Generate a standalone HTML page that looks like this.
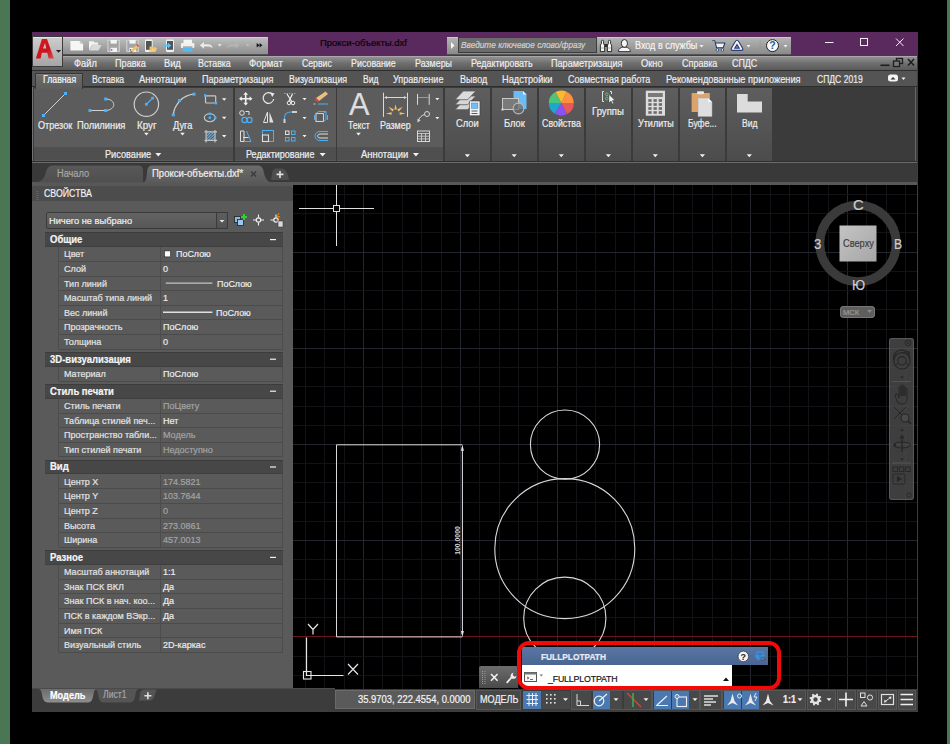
<!DOCTYPE html><html><head><meta charset="utf-8"><style>
html,body{margin:0;padding:0;}
body{width:950px;height:744px;background:#000;position:relative;overflow:hidden;font-family:"Liberation Sans",sans-serif;}
.r{position:absolute;}
.t{position:absolute;white-space:nowrap;line-height:1;transform-origin:0 0;-webkit-text-stroke:0.2px currentColor;}
</style></head><body>
<div class="r" style="left:0px;top:0px;width:10px;height:744px;background:#4a7654;"></div>
<div class="r" style="left:947px;top:0px;width:3px;height:744px;background:#4a7654;"></div>
<div class="r" style="left:32px;top:32px;width:886px;height:680px;background:#3c3c3c;"></div>
<div class="r" style="left:32px;top:32px;width:886px;height:23px;background:#5a2a5e;"></div>
<div class="r" style="left:32px;top:36px;width:31px;height:31px;background:linear-gradient(#d6d6d6,#9a9a9a);box-shadow:inset 0 0 0 1px #5a5a5a;"></div>
<svg class="r" style="left:34px;top:37px;" width="28" height="29" viewBox="0 0 28 29"><path d="M3 22 L10 2 L14 2 L21 22 L16.5 22 L14.8 16.5 L9.2 16.5 L7.5 22 Z M10.2 13 L13.8 13 L12 6.5 Z" fill="#c8161c" fill-rule="evenodd"/><path d="M22 13.5 L27 13.5 L24.5 16.5Z" fill="#2a2a2a"/></svg>
<div class="r" style="left:63px;top:37px;width:205px;height:18px;background:linear-gradient(#bdbdbd,#8e8e8e);border-top:1px solid #d0d0d0;border-bottom:1px solid #555;box-sizing:border-box;"></div>
<svg class="r" style="left:0px;top:0px;" width="300" height="60" viewBox="0 0 300 60"><path d="M70.4 41 H79.8 L83.1 43.8 V50.4 H70.4Z" fill="#f6f6f6"/><path d="M79.8 41 V43.8 H83.1" fill="#c8c8c8"/><path d="M89 41.2 H93.5 L94.5 42.4 H98.1 V44.8 H92.3 L89 50.3Z" fill="#f2f2f2"/><path d="M92.5 45 H101.6 L98.4 50.4 H89.3Z" fill="#dadada"/><rect x="107.3" y="39.8" width="12.6" height="12.1" fill="#cfcfcf"/><rect x="108.5" y="40.8" width="10.2" height="10.1" fill="#a4a4a4"/><rect x="110.5" y="40" width="6.3" height="3.6" fill="#f4f4f4"/><rect x="110.5" y="47.8" width="6.5" height="4.1" fill="#f4f4f4"/><rect x="111.1" y="49.3" width="1.2" height="1.2" fill="#333"/><rect x="126.2" y="39.8" width="12.6" height="12.1" fill="#cfcfcf"/><rect x="127.4" y="40.8" width="10.2" height="10.1" fill="#a4a4a4"/><rect x="129.4" y="40" width="6.3" height="3.6" fill="#f4f4f4"/><rect x="129.4" y="47.8" width="6.5" height="4.1" fill="#f4f4f4"/><rect x="130.0" y="49.3" width="1.2" height="1.2" fill="#333"/><path d="M130.8 50.8 L136.3 45 L138.2 46.9 L132.7 52.2Z" fill="#f2c060"/><path d="M136.3 45 L137.3 44 L139.2 45.9 L138.2 46.9Z" fill="#e84040"/><path d="M130.8 50.8 L132.7 52.2 L130.2 52.6Z" fill="#555"/><rect x="145" y="39.5" width="7.7" height="12.4" rx="1.2" fill="#f0f0f0"/><rect x="146" y="41" width="5.7" height="8.8" fill="#555"/><path d="M149.5 46.5 H152 L152.8 47.3 H156 V48.3 H152 L150 52 H149.5Z" fill="#f2c060"/><path d="M151.8 48.3 H157.2 L155.2 52 H149.9Z" fill="#f6ca70"/><rect x="166" y="39.5" width="8" height="12.4" rx="1.2" fill="#f0f0f0"/><rect x="167" y="41" width="6" height="8.8" fill="#555"/><path d="M163.5 44.5 H168 V42.7 L171.2 45.6 L168 48.5 V46.7 H163.5Z" fill="#5cc0f8"/><rect x="183.5" y="39.7" width="8.5" height="3.5" fill="#f4f4f4"/><rect x="180.9" y="43" width="13.5" height="5" rx="1" fill="#f0f0f0"/><rect x="183" y="47.5" width="9.4" height="4.2" fill="#58b8f4"/><rect x="183" y="46.5" width="9.4" height="1" fill="#888"/><path d="M199.8 45.3 L204 42 V44.3 H208 C211 44.3 212.5 46 212.5 48.5 C211.5 47 210 46.6 208 46.6 H204 V48.8Z" fill="#eaeaea"/><path d="M217.8 44.3 H221.6 L219.7 46.4Z" fill="#f0f0f0"/><path d="M239.6 45.3 L235.4 42 V44.3 H231.4 C228.4 44.3 226.9 46 226.9 48.5 C227.9 47 229.4 46.6 231.4 46.6 H235.4 V48.8Z" fill="#b4b4b4"/><path d="M245.7 44.3 H249.5 L247.6 46.4Z" fill="#c4c4c4"/><path d="M256.7 43 L259.5 45.2 L256.7 47.4Z M259.6 43 L262.4 45.2 L259.6 47.4Z" fill="#111"/></svg>
<span class="t" style="left:319.80px;top:37.57px;font-size:9.6px;color:#050505;transform:scaleX(0.9853);">Прокси-объекты.dxf</span>
<div class="r" style="left:447px;top:37px;width:344px;height:18px;background:linear-gradient(#b4b4b4,#8a8a8a);border-top:1px solid #c8c8c8;border-bottom:1px solid #555;box-sizing:border-box;"></div>
<div class="r" style="left:458px;top:37px;width:139px;height:16px;background:#6c6c6c;border:1px solid #3c3c3c;box-sizing:border-box;"></div>
<svg class="r" style="left:447px;top:37px;" width="11" height="17" viewBox="0 0 11 17"><path d="M4 5 L7.5 8.5 L4 12Z" fill="#fafafa"/></svg>
<span class="t" style="left:460.60px;top:40.98px;font-size:9px;color:#d2d2d2;font-style:italic;transform:scaleX(0.9200);">Введите ключевое слово/фразу</span>
<svg class="r" style="left:0px;top:0px;pointer-events:none;" width="950" height="60" viewBox="0 0 950 60"><rect x="603.5" y="44" width="4.5" height="3" fill="#333"/><path d="M600.4 51.6 V45.2 L601.4 43.6 V41.2 C601.4 39.9 603.6 39.9 603.6 41.2 V43.6 L604.6 45.2 V51.6Z M607.4 51.6 V45.2 L608.4 43.6 V41.2 C608.4 39.9 610.6 39.9 610.6 41.2 V43.6 L611.6 45.2 V51.6Z" fill="#f6f6f6" stroke="#1e1e1e" stroke-width=".9"/><path d="M600.6 48 H604.4 M607.6 48 H611.4" stroke="#888" stroke-width=".6"/><path d="M618.3 51.6 C618.8 48.5 620.5 47.6 622.6 47.3 L626.2 47.3 C628.3 47.6 630 48.5 630.5 51.6Z" fill="#f6f6f6" stroke="#2a2a40" stroke-width=".9"/><ellipse cx="624.4" cy="43.4" rx="3.1" ry="3.9" fill="#f6f6f6" stroke="#1e1e1e" stroke-width=".9"/><path d="M712.3 40.8 H714.8 L716.6 47.8 H723.2 L724.8 43 H715.4" fill="#f4f4f4" stroke="#1e3a70" stroke-width="1.1" stroke-linejoin="round"/><circle cx="717.4" cy="50" r="1.3" fill="#f4f4f4" stroke="#1e3a70" stroke-width=".8"/><circle cx="722.4" cy="50" r="1.3" fill="#f4f4f4" stroke="#1e3a70" stroke-width=".8"/><path d="M737 40.3 C738 40.3 738.4 41 739 42 L742.6 48.3 C743.3 49.6 742.6 50.4 741.4 50.4 H732.6 C731.4 50.4 730.7 49.6 731.4 48.3 L735 42 C735.6 41 736 40.3 737 40.3Z M737 44.6 L734.8 48.1 H739.2Z" fill="#f4f4f4" fill-rule="evenodd" stroke="#2a3f78" stroke-width="1.1"/><path d="M699.5 45 H703.5 L701.5 47.5Z M746.5 45 H750.5 L748.5 47.5Z M783.5 45 H787.5 L785.5 47.5Z" fill="#f0f0f0"/><rect x="759.5" y="39" width="1" height="14" fill="#9a9a9a" opacity=".5"/><circle cx="772.5" cy="45.6" r="6" fill="#f8f8f8" stroke="#222" stroke-width="1"/><text x="772.5" y="49.4" font-family="Liberation Sans" font-weight="bold" font-size="10.5" text-anchor="middle" fill="#2a5a9a">?</text></svg>
<span class="t" style="left:634.90px;top:40.53px;font-size:10px;color:#f4f4f4;transform:scaleX(0.9009);">Вход в службы</span>
<svg class="r" style="left:800px;top:32px;" width="118" height="23" viewBox="0 0 118 23"><rect x="25" y="10" width="8.5" height="1" fill="#f0f0f0"/><rect x="60.5" y="6.5" width="7" height="7" fill="none" stroke="#f0f0f0" stroke-width="1"/><path d="M96 6.5 L103.5 14 M103.5 6.5 L96 14" stroke="#f0f0f0" stroke-width="1"/></svg>
<div class="r" style="left:32px;top:55px;width:886px;height:1px;background:#3e3e3e;"></div>
<div class="r" style="left:32px;top:56px;width:886px;height:15px;background:linear-gradient(#b4b4b4 0,#8e8e8e 1.5px,#6e6e6e 50%,#565656 100%);"></div>
<div class="r" style="left:32px;top:70px;width:886px;height:1px;background:#2e2e2e;"></div>
<div class="r" style="left:32px;top:36px;width:31px;height:31px;background:linear-gradient(#cfcfcf,#a4a4a4);box-shadow:inset 0 0 0 1px #3c3c3c, inset 0 2px 0 #e4e4e4;"></div>
<svg class="r" style="left:0px;top:0px;" width="70" height="70" viewBox="0 0 70 70"><defs><linearGradient id="ag" x1="0" y1="0" x2="1" y2="1"><stop offset="0" stop-color="#e01c22"/><stop offset=".6" stop-color="#c8121a"/><stop offset="1" stop-color="#e04a50"/></linearGradient></defs><path d="M35.9 58.6 L41.9 39 H47 L53.9 58.6 H48.6 L47.3 52.8 H41.8 L40.6 58.6 Z M43 48.6 H46.3 L45 43 Z" fill="url(#ag)" fill-rule="evenodd"/><path d="M55.9 50 H61.2 L58.55 52.8Z" fill="#222"/></svg>
<span class="t" style="left:74.20px;top:58.03px;font-size:10.6px;color:#eeeeee;transform:scaleX(0.8752);">Файл</span>
<span class="t" style="left:115.30px;top:58.03px;font-size:10.6px;color:#eeeeee;transform:scaleX(0.8631);">Правка</span>
<span class="t" style="left:164.20px;top:58.03px;font-size:10.6px;color:#eeeeee;transform:scaleX(0.8750);">Вид</span>
<span class="t" style="left:198.00px;top:58.03px;font-size:10.6px;color:#eeeeee;transform:scaleX(0.8325);">Вставка</span>
<span class="t" style="left:248.80px;top:58.03px;font-size:10.6px;color:#eeeeee;transform:scaleX(0.8977);">Формат</span>
<span class="t" style="left:301.50px;top:58.03px;font-size:10.6px;color:#eeeeee;transform:scaleX(0.8209);">Сервис</span>
<span class="t" style="left:350.50px;top:58.03px;font-size:10.6px;color:#eeeeee;transform:scaleX(0.8390);">Рисование</span>
<span class="t" style="left:414.50px;top:58.03px;font-size:10.6px;color:#eeeeee;transform:scaleX(0.8400);">Размеры</span>
<span class="t" style="left:470.70px;top:58.03px;font-size:10.6px;color:#eeeeee;transform:scaleX(0.8415);">Редактировать</span>
<span class="t" style="left:550.60px;top:58.03px;font-size:10.6px;color:#eeeeee;transform:scaleX(0.8583);">Параметризация</span>
<span class="t" style="left:641.00px;top:58.03px;font-size:10.6px;color:#eeeeee;transform:scaleX(0.8803);">Окно</span>
<span class="t" style="left:681.60px;top:58.03px;font-size:10.6px;color:#eeeeee;transform:scaleX(0.8510);">Справка</span>
<span class="t" style="left:731.70px;top:58.03px;font-size:10.6px;color:#eeeeee;transform:scaleX(0.8405);">СПДС</span>
<svg class="r" style="left:870px;top:55px;" width="48" height="16" viewBox="0 0 48 16"><rect x="10.5" y="9.5" width="9" height="1.6" fill="#1e1e1e"/><rect x="26.5" y="3.5" width="6" height="5" fill="none" stroke="#1e1e1e" stroke-width="1.3"/><rect x="23.5" y="6" width="6" height="5.5" fill="#777" stroke="#1e1e1e" stroke-width="1.3"/><path d="M38 4 L44 10.5 M44 4 L38 10.5" stroke="#1e1e1e" stroke-width="1.6"/></svg>
<div class="r" style="left:32px;top:71px;width:886px;height:15px;background:#545454;"></div>
<div class="r" style="left:32px;top:86px;width:886px;height:1px;background:#2d2d2d;"></div>
<span class="t" style="left:91.60px;top:73.53px;font-size:10.6px;color:#ececec;transform:scaleX(0.8173);">Вставка</span>
<span class="t" style="left:139.00px;top:73.53px;font-size:10.6px;color:#ececec;transform:scaleX(0.8925);">Аннотации</span>
<span class="t" style="left:201.50px;top:73.53px;font-size:10.6px;color:#ececec;transform:scaleX(0.8583);">Параметризация</span>
<span class="t" style="left:288.80px;top:73.53px;font-size:10.6px;color:#ececec;transform:scaleX(0.8386);">Визуализация</span>
<span class="t" style="left:362.50px;top:73.53px;font-size:10.6px;color:#ececec;transform:scaleX(0.8021);">Вид</span>
<span class="t" style="left:393.30px;top:73.53px;font-size:10.6px;color:#ececec;transform:scaleX(0.8567);">Управление</span>
<span class="t" style="left:459.50px;top:73.53px;font-size:10.6px;color:#ececec;transform:scaleX(0.8518);">Вывод</span>
<span class="t" style="left:502.20px;top:73.53px;font-size:10.6px;color:#ececec;transform:scaleX(0.8684);">Надстройки</span>
<span class="t" style="left:568.30px;top:73.53px;font-size:10.6px;color:#ececec;transform:scaleX(0.8485);">Совместная работа</span>
<span class="t" style="left:665.90px;top:73.53px;font-size:10.6px;color:#ececec;transform:scaleX(0.8747);">Рекомендованные приложения</span>
<span class="t" style="left:816.80px;top:73.53px;font-size:10.6px;color:#ececec;transform:scaleX(0.8067);">СПДС 2019</span>
<svg class="r" style="left:880px;top:71px;" width="38" height="15" viewBox="0 0 38 15"><rect x="8" y="3.5" width="10" height="7" rx="2.5" fill="#f4f4f4"/><path d="M10.5 8.5 L13 6 L15.5 8.5Z" fill="#333"/><path d="M21.5 6.5 H25.5 L23.5 9Z" fill="#f0f0f0"/></svg>
<div class="r" style="left:32px;top:87px;width:886px;height:75px;background:#3b3b3b;"></div>
<div class="r" style="left:32px;top:87px;width:1px;height:76px;background:#727272;"></div>
<div class="r" style="left:915px;top:87px;width:1px;height:76px;background:#666;"></div>
<div class="r" style="left:34px;top:88px;width:199px;height:59px;background:#5c5c5c;"></div>
<div class="r" style="left:34px;top:147px;width:199px;height:13px;background:#4f4f4f;"></div>
<div class="r" style="left:34px;top:160px;width:199px;height:1px;background:#595959;"></div>
<div class="r" style="left:235px;top:88px;width:101px;height:59px;background:#5c5c5c;"></div>
<div class="r" style="left:235px;top:147px;width:101px;height:13px;background:#4f4f4f;"></div>
<div class="r" style="left:235px;top:160px;width:101px;height:1px;background:#595959;"></div>
<div class="r" style="left:337px;top:88px;width:106px;height:59px;background:#5c5c5c;"></div>
<div class="r" style="left:337px;top:147px;width:106px;height:13px;background:#4f4f4f;"></div>
<div class="r" style="left:337px;top:160px;width:106px;height:1px;background:#595959;"></div>
<div class="r" style="left:445px;top:88px;width:45px;height:73px;background:linear-gradient(#5e5e5e,#4c4c4c);"></div>
<div class="r" style="left:492px;top:88px;width:45px;height:73px;background:linear-gradient(#5e5e5e,#4c4c4c);"></div>
<div class="r" style="left:539px;top:88px;width:45px;height:73px;background:linear-gradient(#5e5e5e,#4c4c4c);"></div>
<div class="r" style="left:586px;top:88px;width:45px;height:73px;background:linear-gradient(#5e5e5e,#4c4c4c);"></div>
<div class="r" style="left:633px;top:88px;width:45px;height:73px;background:linear-gradient(#5e5e5e,#4c4c4c);"></div>
<div class="r" style="left:680px;top:88px;width:45px;height:73px;background:linear-gradient(#5e5e5e,#4c4c4c);"></div>
<div class="r" style="left:727px;top:88px;width:45px;height:73px;background:linear-gradient(#5e5e5e,#4c4c4c);"></div>
<div class="r" style="left:32px;top:161px;width:886px;height:1px;background:#303030;"></div>
<div class="r" style="left:35px;top:73px;width:48px;height:16px;background:linear-gradient(#6c6c6c,#5e5e5e);border:1px solid #363636;border-bottom:none;box-sizing:border-box;box-shadow:inset 0 1px 0 #7a7a7a;"></div>
<span class="t" style="left:42.60px;top:73.53px;font-size:10.6px;color:#f8f8f8;transform:scaleX(0.8228);">Главная</span>
<span class="t" style="left:104.50px;top:149.94px;font-size:10px;color:#eeeeee;transform:scaleX(0.9176);">Рисование</span>
<span class="t" style="left:246.30px;top:149.94px;font-size:10px;color:#eeeeee;transform:scaleX(0.8976);">Редактирование</span>
<span class="t" style="left:361.00px;top:149.94px;font-size:10px;color:#eeeeee;transform:scaleX(0.9440);">Аннотации</span>
<svg class="r" style="left:0px;top:0px;pointer-events:none;" width="950" height="170" viewBox="0 0 950 170"><path d="M155.3 152.95 H161.3 L158.3 156.4Z" fill="#f2f2f2"/><path d="M319.6 152.95 H325.6 L322.6 156.4Z" fill="#f2f2f2"/><path d="M412.9 152.95 H418.9 L415.9 156.4Z" fill="#f2f2f2"/><path d="M43.5 115.5 L65.5 93.5" stroke="#d4d4d4" stroke-width="1"/><rect x="42" y="114" width="3" height="3" fill="#4cb0f8"/><rect x="64" y="92" width="3" height="3" fill="#4cb0f8"/><path d="M90 110.5 H105.5 C111 110.5 113.8 107 113.8 104.7 C113.8 102 111 99 105.5 99" fill="none" stroke="#d4d4d4" stroke-width="1"/><rect x="88.5" y="109" width="3" height="3" fill="#4cb0f8"/><rect x="104.2" y="109" width="3" height="3" fill="#4cb0f8"/><rect x="104.2" y="97.5" width="3" height="3" fill="#4cb0f8"/><circle cx="146.4" cy="104.2" r="12.2" fill="none" stroke="#cfcfcf" stroke-width="1.2"/><path d="M146.4 104.2 L153.5 97.2" stroke="#4cb0f8" stroke-width="1.2"/><path d="M154.2 96.5 L150.5 97.3 L153.4 100.2Z" fill="#4cb0f8"/><rect x="145" y="102.8" width="2.8" height="2.8" fill="#4cb0f8"/><path d="M173.3 114.8 C174.5 104 183 95 194 94.2" fill="none" stroke="#cfcfcf" stroke-width="1.2"/><rect x="171.8" y="113.3" width="3" height="3" fill="#4cb0f8"/><rect x="178" y="99" width="3" height="3" fill="#4cb0f8"/><rect x="192.5" y="92.7" width="3" height="3" fill="#4cb0f8"/><path d="M144.1 132.735 H148.70000000000002 L146.4 135.38Z" fill="#f2f2f2"/><path d="M180.2 132.735 H184.8 L182.5 135.38Z" fill="#f2f2f2"/><rect x="205.5" y="95.8" width="10.2" height="7.2" rx=".8" fill="none" stroke="#c8c8c8" stroke-width="1.2"/><rect x="204" y="94.2" width="2.4" height="2.4" fill="#4cb0f8"/><rect x="214.8" y="102" width="2.4" height="2.4" fill="#4cb0f8"/><ellipse cx="209.8" cy="117.7" rx="5.5" ry="4" fill="none" stroke="#c8c8c8" stroke-width="1.1"/><rect x="208.6" y="112.6" width="2.4" height="2.4" fill="#4cb0f8"/><rect x="208.6" y="116.5" width="2.4" height="2.4" fill="#4cb0f8"/><rect x="214.1" y="116.5" width="2.4" height="2.4" fill="#4cb0f8"/><defs><pattern id="hp" width="2" height="2" patternUnits="userSpaceOnUse" patternTransform="rotate(45)"><rect width="1" height="2" fill="#5ab0f0"/></pattern></defs><rect x="206.5" y="132.3" width="8.3" height="7.8" fill="url(#hp)"/><path d="M204.5 131.8 H217 M204.5 140.3 H217 M206.1 130 V142.5 M215 130 V142.5" stroke="#c4c4c4" stroke-width="1.2"/><path d="M222.0 98.29 H226.39999999999998 L224.2 100.82Z" fill="#f2f2f2"/><path d="M222.0 116.79 H226.39999999999998 L224.2 119.32Z" fill="#f2f2f2"/><path d="M222.0 134.98999999999998 H226.39999999999998 L224.2 137.51999999999998Z" fill="#f2f2f2"/><path d="M245.7 93 V104.5 M240 98.7 H251.4" stroke="#eeeeee" stroke-width="1.6"/><path d="M245.7 92 L243.3 94.8 H248.1Z M245.7 105.5 L243.3 102.7 H248.1Z M239 98.7 L241.8 96.3 V101.1Z M252.4 98.7 L249.6 96.3 V101.1Z" fill="#eeeeee"/><path d="M272.5 94.5 A5.3 5.3 0 1 0 273.7 99" fill="none" stroke="#e8e8e8" stroke-width="1.2"/><path d="M270 92.3 L274.6 93.5 L272.2 97Z" fill="#e8e8e8"/><path d="M284 93.5 H296" stroke="#4cb0f8" stroke-width="1" stroke-dasharray="1.5 1"/><path d="M287 94 L292 102 M292.5 94 L289 101" stroke="#eeeeee" stroke-width="1.2"/><circle cx="289" cy="103" r="1.8" fill="none" stroke="#eee" stroke-width="1"/><circle cx="293" cy="103" r="1.8" fill="none" stroke="#eee" stroke-width="1"/><path d="M316 98 L325.5 91.5 L328 94 L319 101Z" fill="#e8c080"/><path d="M316 98 L319 101 L317.5 102.3 L314.5 99.5Z" fill="#e04040"/><path d="M318 104 H328" stroke="#4cb0f8" stroke-width="1"/><path d="M313.5 104 H315.5" stroke="#ccc" stroke-width="1"/><circle cx="242" cy="113" r="2.3" fill="none" stroke="#e0e0e0" stroke-width="1"/><path d="M245.5 111.5 H249 V115" fill="none" stroke="#e0e0e0" stroke-width="1"/><circle cx="244.5" cy="120" r="2.6" fill="none" stroke="#4cb0f8" stroke-width="1.2"/><circle cx="249.5" cy="120" r="2.6" fill="none" stroke="#4cb0f8" stroke-width="1.2"/><path d="M267.5 112 L263.5 122.5 H267.5Z" fill="none" stroke="#e0e0e0" stroke-width="1"/><path d="M269.5 112 L273.5 122.5 H269.5Z" fill="#e0e0e0"/><path d="M284.5 123 V118 C284.5 114 287 112 291 112 H297" fill="none" stroke="#4cb0f8" stroke-width="1.1"/><path d="M284.5 123 V119 M292 112 H297" stroke="#cfcfcf" stroke-width="2"/><rect x="316" y="113.5" width="7.5" height="8" fill="none" stroke="#d0d0d0" stroke-width="1.1"/><path d="M316 113.5 L318.5 111.5 H326 V119.5 L323.5 121.5 M323.5 113.5 L326 111.5" fill="none" stroke="#4cb0f8" stroke-width="1"/><path d="M314.5 115 V120 M327.5 115 V120" stroke="#4cb0f8" stroke-width="1"/><path d="M240.5 131 H244 V141.5 H240.5Z" fill="none" stroke="#e0e0e0" stroke-width="1"/><path d="M246.5 131 L251 141.5 H244" fill="none" stroke="#4cb0f8" stroke-width="1"/><path d="M243 137.5 H248.5" stroke="#e0e0e0" stroke-width="1"/><rect x="262.5" y="130.5" width="11" height="11" fill="none" stroke="#4cb0f8" stroke-width="1"/><rect x="262.5" y="135" width="6" height="6.5" fill="none" stroke="#e0e0e0" stroke-width="1.1"/><rect x="285.5" y="131" width="3.5" height="3.5" fill="none" stroke="#e0e0e0" stroke-width="1"/><rect x="291.5" y="131" width="3.5" height="3.5" fill="none" stroke="#4cb0f8" stroke-width="1"/><rect x="285.5" y="137.5" width="3.5" height="3.5" fill="none" stroke="#4cb0f8" stroke-width="1"/><rect x="291.5" y="137.5" width="3.5" height="3.5" fill="none" stroke="#4cb0f8" stroke-width="1"/><path d="M328 131.5 H320 C317 131.5 315 133.5 315 136 C315 138.5 317 140.5 320 140.5 H328" fill="none" stroke="#4cb0f8" stroke-width="1"/><path d="M328 134 H320 C318.5 134 317.7 135 317.7 136 C317.7 137 318.5 138 320 138 H328" fill="none" stroke="#e0e0e0" stroke-width="1"/><path d="M302.5 97.9 H306.5 L304.5 100.2Z" fill="#f2f2f2"/><path d="M302.5 116.9 H306.5 L304.5 119.2Z" fill="#f2f2f2"/><path d="M302.5 134.9 H306.5 L304.5 137.2Z" fill="#f2f2f2"/><path d="M383.5 92.7 V116.9 M407.5 92.7 V116.9" stroke="#d8d8d8" stroke-width="1"/><path d="M385 97.5 H406" stroke="#d8d8d8" stroke-width="1"/><path d="M384 97.5 L387 96 V99Z M407 97.5 L404 96 V99Z" fill="#d8d8d8"/><path d="M395.60 104.20 L394.35 109.40 L396.85 109.40Z" fill="#f2c46e"/><path d="M388.40 106.80 L392.42 111.58 L393.98 109.62Z" fill="#f2c46e"/><path d="M402.80 106.80 L397.22 109.62 L398.78 111.58Z" fill="#f2c46e"/><path d="M385.80 113.60 L391.60 114.85 L391.60 112.35Z" fill="#f2c46e"/><path d="M405.40 113.60 L399.60 112.35 L399.60 114.85Z" fill="#f2c46e"/><path d="M356.2 132.735 H360.8 L358.5 135.38Z" fill="#f2f2f2"/><path d="M417.5 93.9 V104.8 M429.2 93.9 V104.8" stroke="#d8d8d8" stroke-width="1"/><path d="M418 97.5 H429" stroke="#4cb0f8" stroke-width="1"/><circle cx="427" cy="114" r="2.5" fill="none" stroke="#d8d8d8" stroke-width="1"/><path d="M424.5 114.5 C421 115.5 419 118 418.5 121" fill="none" stroke="#d8d8d8" stroke-width="1"/><path d="M417.5 122.5 L417.5 118.5 L420.5 120.5Z" fill="#d8d8d8"/><rect x="417.5" y="131" width="12" height="10.5" fill="none" stroke="#d8d8d8" stroke-width="1"/><path d="M417.5 133.5 H429.5 M417.5 136.2 H429.5 M417.5 138.9 H429.5 M421.5 133.5 V141.5 M425.5 133.5 V141.5" stroke="#d8d8d8" stroke-width=".8"/><path d="M435.3 97.9 H439.3 L437.3 100.2Z" fill="#f2f2f2"/><path d="M435.3 116.9 H439.3 L437.3 119.2Z" fill="#f2f2f2"/><path d="M455 109.7 L463.3 101 H475.8 L467.7 109.7Z" fill="#d6d6d6" stroke="#5a5a5a" stroke-width=".8"/><path d="M455 104.7 L463.3 96 H475.8 L467.7 104.7Z" fill="#d6d6d6" stroke="#5a5a5a" stroke-width=".8"/><path d="M455 99.7 L463.3 91 H475.8 L467.7 99.7Z" fill="#dcdcdc" stroke="#5a5a5a" stroke-width=".8"/><rect x="469.4" y="100.9" width="10.6" height="14.9" rx=".8" fill="#f2f2f2" stroke="#444" stroke-width=".7"/><rect x="471.3" y="103" width="6.6" height="5.5" fill="#6cc0f8" stroke="#3a7ab0" stroke-width=".4"/><path d="M471.5 111 H477.5 M471.5 113.5 H477.5" stroke="#444" stroke-width=".9"/><path d="M513.5 91 H523 L526.5 94.5 V109 H513.5Z" fill="#6cbcf4"/><path d="M523 91 V94.5 H526.5" fill="#f0f0f0"/><rect x="502.5" y="98.5" width="16" height="11" fill="#7a7a7a" stroke="#c8c8c8" stroke-width="1"/><circle cx="518.5" cy="108.5" r="5.4" fill="#6a6a6a" fill-opacity=".7" stroke="#b8b8b8" stroke-width="1.1"/><rect x="501.5" y="108.5" width="2" height="2" fill="#e0e0e0"/><path d="M561.3 103 L573.80 103.00 A12.5 12.5 0 0 0 566.58 91.67Z" fill="#ff9040"/><path d="M561.3 103 L566.58 91.67 A12.5 12.5 0 0 0 555.43 91.96Z" fill="#fdb92e"/><path d="M561.3 103 L555.43 91.96 A12.5 12.5 0 0 0 548.80 103.00Z" fill="#4ec47a"/><path d="M561.3 103 L548.80 103.00 A12.5 12.5 0 0 0 554.68 113.60Z" fill="#1aa8d0"/><path d="M561.3 103 L554.68 113.60 A12.5 12.5 0 0 0 567.17 114.04Z" fill="#8a52f0"/><path d="M561.3 103 L567.17 114.04 A12.5 12.5 0 0 0 573.80 103.00Z" fill="#e85a5a"/><path d="M604 91.5 H602.5 V101.5 H604 M610 91.5 H611.5 V94" fill="none" stroke="#e0e0e0" stroke-width="1"/><circle cx="606.8" cy="94.3" r="1.4" fill="none" stroke="#4cc47a" stroke-width="1"/><circle cx="606.8" cy="98.5" r="1.4" fill="none" stroke="#4cc47a" stroke-width="1"/><path d="M609 94.5 V103 L611 101 L612.5 104 L613.7 103.4 L612.3 100.5 L614.8 100.3Z" fill="#f2f2f2" stroke="#333" stroke-width=".4"/><rect x="645.8" y="90.7" width="19.2" height="25" fill="#dcdcdc"/><rect x="648" y="93" width="14.8" height="4" fill="#7a7a7a"/><rect x="648.3" y="99.2" width="3.3" height="2.6" fill="#6a6a6a"/><rect x="648.3" y="103.2" width="3.3" height="2.6" fill="#6a6a6a"/><rect x="648.3" y="107.2" width="3.3" height="2.6" fill="#6a6a6a"/><rect x="648.3" y="111.2" width="3.3" height="2.6" fill="#6a6a6a"/><rect x="653.5" y="99.2" width="3.3" height="2.6" fill="#6a6a6a"/><rect x="653.5" y="103.2" width="3.3" height="2.6" fill="#6a6a6a"/><rect x="653.5" y="107.2" width="3.3" height="2.6" fill="#6a6a6a"/><rect x="653.5" y="111.2" width="3.3" height="2.6" fill="#6a6a6a"/><rect x="658.7" y="99.2" width="3.3" height="2.6" fill="#6a6a6a"/><rect x="658.7" y="103.2" width="3.3" height="2.6" fill="#6a6a6a"/><rect x="658.7" y="107.2" width="3.3" height="2.6" fill="#6a6a6a"/><rect x="658.7" y="111.2" width="3.3" height="2.6" fill="#6a6a6a"/><rect x="691.6" y="93" width="18.2" height="19" fill="#dca36a"/><rect x="697" y="91.3" width="7" height="3" rx="1" fill="#e8e8e8"/><path d="M698 98 H708 L712 102 V116.5 H698Z" fill="#dedede" stroke="#aaa" stroke-width=".5"/><path d="M708 98 V102 H712" fill="#f8f8f8"/><path d="M737 93.9 H747.7 V101.5 H762 V112.5 H737Z" fill="#dcdcdc"/><path d="M464.79999999999995 154.26999999999998 H470.0 L467.4 157.26Z" fill="#f2f2f2"/><path d="M511.6 154.26999999999998 H516.8000000000001 L514.2 157.26Z" fill="#f2f2f2"/><path d="M558.6999999999999 154.26999999999998 H563.9 L561.3 157.26Z" fill="#f2f2f2"/><path d="M605.8 154.26999999999998 H611.0 L608.4 157.26Z" fill="#f2f2f2"/><path d="M652.6999999999999 154.26999999999998 H657.9 L655.3 157.26Z" fill="#f2f2f2"/><path d="M699.8 154.26999999999998 H705.0 L702.4 157.26Z" fill="#f2f2f2"/><path d="M746.6999999999999 154.26999999999998 H751.9 L749.3 157.26Z" fill="#f2f2f2"/></svg>
<span class="t" style="left:37.80px;top:120.94px;font-size:10px;color:#ececec;transform:scaleX(0.9060);">Отрезок</span>
<span class="t" style="left:77.30px;top:120.94px;font-size:10px;color:#ececec;transform:scaleX(0.9326);">Полилиния</span>
<span class="t" style="left:136.70px;top:120.94px;font-size:10px;color:#ececec;transform:scaleX(0.9799);">Круг</span>
<span class="t" style="left:172.80px;top:120.94px;font-size:10px;color:#ececec;transform:scaleX(0.9238);">Дуга</span>
<span class="t" style="left:347.70px;top:120.94px;font-size:10px;color:#ececec;transform:scaleX(0.8651);">Текст</span>
<span class="t" style="left:380.40px;top:120.94px;font-size:10px;color:#ececec;transform:scaleX(0.8908);">Размер</span>
<span class="t" style="left:455.80px;top:118.83px;font-size:10px;color:#ececec;transform:scaleX(0.9300);">Слои</span>
<span class="t" style="left:504.40px;top:118.83px;font-size:10px;color:#ececec;transform:scaleX(0.9330);">Блок</span>
<span class="t" style="left:542.40px;top:118.83px;font-size:10px;color:#ececec;transform:scaleX(0.8851);">Свойства</span>
<span class="t" style="left:592.40px;top:106.73px;font-size:10px;color:#ececec;transform:scaleX(0.9580);">Группы</span>
<span class="t" style="left:637.60px;top:118.83px;font-size:10px;color:#ececec;transform:scaleX(0.9018);">Утилиты</span>
<span class="t" style="left:688.40px;top:118.83px;font-size:10px;color:#ececec;transform:scaleX(0.8546);">Буфе...</span>
<span class="t" style="left:741.80px;top:118.83px;font-size:10px;color:#ececec;transform:scaleX(0.8508);">Вид</span>
<span class="t" style="left:348.60px;top:89.46px;font-size:31px;color:#dedede;transform:scaleX(0.9903);">A</span>
<div class="r" style="left:32px;top:162px;width:886px;height:1px;background:#6a6a6a;"></div>
<div class="r" style="left:32px;top:163px;width:886px;height:19px;background:#393939;"></div>
<div class="r" style="left:32px;top:182px;width:886px;height:4px;background:#585858;"></div>
<svg class="r" style="left:32px;top:162px;" width="270" height="23" viewBox="0 0 270 23"><defs><linearGradient id="tg1" x1="0" y1="0" x2="0" y2="1"><stop offset="0" stop-color="#585858"/><stop offset="1" stop-color="#4f4f4f"/></linearGradient><linearGradient id="tg2" x1="0" y1="0" x2="0" y2="1"><stop offset="0" stop-color="#6c6c6c"/><stop offset="1" stop-color="#5a5a5a"/></linearGradient></defs><path d="M0 20.5 C8 20.5 12 18.5 14 10 C15.5 5 17.5 3.5 22 3.5 H106 C109.5 3.5 111 5 111 8 V20.5 Z" fill="url(#tg1)"/><path d="M111 20.5 C114 20.5 114.5 16 115 10 C115.5 5 117 3.5 121 3.5 H225 C229 3.5 230.5 5 231.5 9 C233 16 235 20 240 20.5 Z" fill="url(#tg2)"/><path d="M239 18 C240 13 239.5 7 244 6.5 H249 C254 6.5 256 11 257 18 Z" fill="#4e4e4e"/><path d="M219 9.5 L224 14.5 M224 9.5 L219 14.5" stroke="#3a3a3a" stroke-width="1.3"/><path d="M244.5 12.4 H251.5 M248 8.9 V15.9" stroke="#e0e0e0" stroke-width="1.6"/></svg>
<span class="t" style="left:56.90px;top:169.44px;font-size:10px;color:#a8a8a8;transform:scaleX(0.9211);">Начало</span>
<span class="t" style="left:151.70px;top:169.23px;font-size:10px;color:#efefef;transform:scaleX(0.9525);">Прокси-объекты.dxf*</span>
<div class="r" style="left:32px;top:186px;width:261px;height:502px;background:#5a5a5a;"></div>
<div class="r" style="left:32px;top:186px;width:261px;height:15px;background:#4c4c4c;border-top-right-radius:4px;"></div>
<div class="r" style="left:36px;top:191px;width:3px;height:9px;background:repeating-linear-gradient(#5e5e5e 0 1px,transparent 1px 2px);"></div>
<span class="t" style="left:43.50px;top:187.66px;font-size:10.8px;color:#f2f2f2;transform:scaleX(0.8149);">СВОЙСТВА</span>
<div class="r" style="left:46px;top:212px;width:182px;height:17px;background:linear-gradient(#636363,#575757);border:1px solid #3a3a3a;box-sizing:border-box;border-radius:2px;"></div>
<div class="r" style="left:216px;top:212px;width:12px;height:17px;background:linear-gradient(#5e5e5e,#525252);border:1px solid #3a3a3a;box-sizing:border-box;"></div>
<span class="t" style="left:49.00px;top:215.90px;font-size:9.8px;color:#f0f0f0;transform:scaleX(0.9459);">Ничего не выбрано</span>
<svg class="r" style="left:0px;top:0px;pointer-events:none;" width="300" height="240" viewBox="0 0 300 240"><path d="M219.5 220 H224.5 L222 222.5Z" fill="#e8e8e8"/><rect x="234.5" y="216.5" width="6" height="6" fill="#8cb8e0" stroke="#222" stroke-width=".8"/><rect x="237.5" y="219.5" width="6" height="6" fill="#9ac8f0" stroke="#222" stroke-width=".8"/><path d="M241 217 H247 M244 214 V220" stroke="#2ad42a" stroke-width="2"/><circle cx="258.5" cy="220" r="2.2" fill="none" stroke="#f0f0f0" stroke-width="1.2"/><path d="M253 220 H256 M261 220 H264 M258.5 214.5 V217.5 M258.5 222.5 V225.5" stroke="#f0f0f0" stroke-width="1.1"/><circle cx="276" cy="220" r="2.2" fill="none" stroke="#f0f0f0" stroke-width="1.2"/><path d="M270.5 220 H273.5 M276 214.5 V217.5" stroke="#f0f0f0" stroke-width="1.1"/><path d="M279 213 L277.5 216.5 H279.5 L278 219" stroke="#f08a20" stroke-width="1"/><rect x="278" y="221" width="5" height="6" fill="#d8d8d8" stroke="#333" stroke-width=".5"/></svg>
<div class="r" style="left:45px;top:232px;width:238px;height:15px;background:#474747;border-top:1px solid #3c3c3c;border-bottom:1px solid #3f3f3f;box-sizing:border-box;"></div>
<span class="t" style="left:50.40px;top:235.03px;font-size:10px;color:#f4f4f4;font-weight:bold;transform:scaleX(0.9500);">Общие</span>
<span class="t" style="left:63.60px;top:249.46px;font-size:9.5px;color:#e4e4e4;transform:scaleX(0.9500);">Цвет</span>
<span class="t" style="left:176.30px;top:249.46px;font-size:9.5px;color:#ececec;transform:scaleX(0.9400);">ПоСлою</span>
<span class="t" style="left:63.60px;top:264.06px;font-size:9.5px;color:#e4e4e4;transform:scaleX(0.9500);">Слой</span>
<span class="t" style="left:163.20px;top:264.06px;font-size:9.5px;color:#ececec;transform:scaleX(0.9500);">0</span>
<span class="t" style="left:63.60px;top:278.66px;font-size:9.5px;color:#e4e4e4;transform:scaleX(0.9500);">Тип линий</span>
<span class="t" style="left:217.00px;top:278.66px;font-size:9.5px;color:#ececec;transform:scaleX(0.9400);">ПоСлою</span>
<span class="t" style="left:63.60px;top:293.26px;font-size:9.5px;color:#e4e4e4;transform:scaleX(0.9500);">Масштаб типа линий</span>
<span class="t" style="left:163.20px;top:293.26px;font-size:9.5px;color:#ececec;transform:scaleX(0.9500);">1</span>
<span class="t" style="left:63.60px;top:307.86px;font-size:9.5px;color:#e4e4e4;transform:scaleX(0.9500);">Вес линий</span>
<span class="t" style="left:216.00px;top:307.86px;font-size:9.5px;color:#ececec;transform:scaleX(0.9400);">ПоСлою</span>
<span class="t" style="left:63.60px;top:322.46px;font-size:9.5px;color:#e4e4e4;transform:scaleX(0.9500);">Прозрачность</span>
<span class="t" style="left:163.20px;top:322.46px;font-size:9.5px;color:#ececec;transform:scaleX(0.9500);">ПоСлою</span>
<span class="t" style="left:63.60px;top:337.06px;font-size:9.5px;color:#e4e4e4;transform:scaleX(0.9500);">Толщина</span>
<span class="t" style="left:163.20px;top:337.06px;font-size:9.5px;color:#ececec;transform:scaleX(0.9500);">0</span>
<div class="r" style="left:45px;top:352px;width:238px;height:15px;background:#474747;border-top:1px solid #3c3c3c;border-bottom:1px solid #3f3f3f;box-sizing:border-box;"></div>
<span class="t" style="left:50.40px;top:354.64px;font-size:10px;color:#f4f4f4;font-weight:bold;transform:scaleX(0.9500);">3D-визуализация</span>
<span class="t" style="left:63.60px;top:369.06px;font-size:9.5px;color:#e4e4e4;transform:scaleX(0.9500);">Материал</span>
<span class="t" style="left:163.20px;top:369.06px;font-size:9.5px;color:#ececec;transform:scaleX(0.9500);">ПоСлою</span>
<div class="r" style="left:45px;top:384px;width:238px;height:15px;background:#474747;border-top:1px solid #3c3c3c;border-bottom:1px solid #3f3f3f;box-sizing:border-box;"></div>
<span class="t" style="left:50.40px;top:386.64px;font-size:10px;color:#f4f4f4;font-weight:bold;transform:scaleX(0.9500);">Стиль печати</span>
<span class="t" style="left:63.60px;top:401.06px;font-size:9.5px;color:#e4e4e4;transform:scaleX(0.9500);">Стиль печати</span>
<span class="t" style="left:163.20px;top:401.06px;font-size:9.5px;color:#a4a4a4;transform:scaleX(0.9500);">ПоЦвету</span>
<span class="t" style="left:63.60px;top:415.66px;font-size:9.5px;color:#e4e4e4;transform:scaleX(0.9500);">Таблица  стилей  печ...</span>
<span class="t" style="left:163.20px;top:415.66px;font-size:9.5px;color:#ececec;transform:scaleX(0.9500);">Нет</span>
<span class="t" style="left:63.60px;top:430.26px;font-size:9.5px;color:#e4e4e4;transform:scaleX(0.9500);">Пространство  табли...</span>
<span class="t" style="left:163.20px;top:430.26px;font-size:9.5px;color:#a4a4a4;transform:scaleX(0.9500);">Модель</span>
<span class="t" style="left:63.60px;top:444.86px;font-size:9.5px;color:#e4e4e4;transform:scaleX(0.9500);">Тип стилей печати</span>
<span class="t" style="left:163.20px;top:444.86px;font-size:9.5px;color:#a4a4a4;transform:scaleX(0.9500);">Недоступно</span>
<div class="r" style="left:45px;top:460px;width:238px;height:14px;background:#474747;border-top:1px solid #3c3c3c;border-bottom:1px solid #3f3f3f;box-sizing:border-box;"></div>
<span class="t" style="left:50.40px;top:462.44px;font-size:10px;color:#f4f4f4;font-weight:bold;transform:scaleX(0.9500);">Вид</span>
<span class="t" style="left:63.60px;top:476.86px;font-size:9.5px;color:#e4e4e4;transform:scaleX(0.9500);">Центр X</span>
<span class="t" style="left:163.20px;top:476.86px;font-size:9.5px;color:#a4a4a4;transform:scaleX(0.9500);">174.5821</span>
<span class="t" style="left:63.60px;top:491.46px;font-size:9.5px;color:#e4e4e4;transform:scaleX(0.9500);">Центр Y</span>
<span class="t" style="left:163.20px;top:491.46px;font-size:9.5px;color:#a4a4a4;transform:scaleX(0.9500);">103.7644</span>
<span class="t" style="left:63.60px;top:506.06px;font-size:9.5px;color:#e4e4e4;transform:scaleX(0.9500);">Центр Z</span>
<span class="t" style="left:163.20px;top:506.06px;font-size:9.5px;color:#a4a4a4;transform:scaleX(0.9500);">0</span>
<span class="t" style="left:63.60px;top:520.66px;font-size:9.5px;color:#e4e4e4;transform:scaleX(0.9500);">Высота</span>
<span class="t" style="left:163.20px;top:520.66px;font-size:9.5px;color:#a4a4a4;transform:scaleX(0.9500);">273.0861</span>
<span class="t" style="left:63.60px;top:535.26px;font-size:9.5px;color:#e4e4e4;transform:scaleX(0.9500);">Ширина</span>
<span class="t" style="left:163.20px;top:535.26px;font-size:9.5px;color:#a4a4a4;transform:scaleX(0.9500);">457.0013</span>
<div class="r" style="left:45px;top:550px;width:238px;height:15px;background:#474747;border-top:1px solid #3c3c3c;border-bottom:1px solid #3f3f3f;box-sizing:border-box;"></div>
<span class="t" style="left:50.40px;top:552.84px;font-size:10px;color:#f4f4f4;font-weight:bold;transform:scaleX(0.9500);">Разное</span>
<span class="t" style="left:63.60px;top:567.26px;font-size:9.5px;color:#e4e4e4;transform:scaleX(0.9500);">Масштаб аннотаций</span>
<span class="t" style="left:163.20px;top:567.26px;font-size:9.5px;color:#ececec;transform:scaleX(0.9500);">1:1</span>
<span class="t" style="left:63.60px;top:581.86px;font-size:9.5px;color:#e4e4e4;transform:scaleX(0.9500);">Знак ПСК ВКЛ</span>
<span class="t" style="left:163.20px;top:581.86px;font-size:9.5px;color:#ececec;transform:scaleX(0.9500);">Да</span>
<span class="t" style="left:63.60px;top:596.46px;font-size:9.5px;color:#e4e4e4;transform:scaleX(0.9500);">Знак ПСК в нач. коо...</span>
<span class="t" style="left:163.20px;top:596.46px;font-size:9.5px;color:#ececec;transform:scaleX(0.9500);">Да</span>
<span class="t" style="left:63.60px;top:611.06px;font-size:9.5px;color:#e4e4e4;transform:scaleX(0.9500);">ПСК в каждом ВЭкр...</span>
<span class="t" style="left:163.20px;top:611.06px;font-size:9.5px;color:#ececec;transform:scaleX(0.9500);">Да</span>
<span class="t" style="left:63.60px;top:625.66px;font-size:9.5px;color:#e4e4e4;transform:scaleX(0.9500);">Имя ПСК</span>
<span class="t" style="left:63.60px;top:640.26px;font-size:9.5px;color:#e4e4e4;transform:scaleX(0.9500);">Визуальный стиль</span>
<span class="t" style="left:163.20px;top:640.26px;font-size:9.5px;color:#ececec;transform:scaleX(0.9500);">2D-каркас</span>
<svg class="r" style="left:0px;top:0px;pointer-events:none;" width="300" height="700" viewBox="0 0 300 700"><path d="M270 239.6 H276" stroke="#f0f0f0" stroke-width="1.2"/><path d="M59 261.5 H283" stroke="#4b4b4b" stroke-width="1"/><rect x="164.5" y="250.9" width="6" height="6" fill="#fafafa" stroke="#222" stroke-width=".6"/><path d="M59 276.5 H283" stroke="#4b4b4b" stroke-width="1"/><path d="M59 290.5 H283" stroke="#4b4b4b" stroke-width="1"/><path d="M165.8 283.1 H212.4" stroke="#e0e0e0" stroke-width="1"/><path d="M59 305.5 H283" stroke="#4b4b4b" stroke-width="1"/><path d="M59 319.5 H283" stroke="#4b4b4b" stroke-width="1"/><path d="M163 312.3 H212.4" stroke="#e0e0e0" stroke-width="1.6"/><path d="M59 334.5 H283" stroke="#4b4b4b" stroke-width="1"/><path d="M59 349.5 H283" stroke="#4b4b4b" stroke-width="1"/><path d="M58.5 246.9 V349.1 M160.5 246.9 V349.1 M282.5 246.9 V349.1" stroke="#4d4d4d" stroke-width="1"/><path d="M270 359.2 H276" stroke="#f0f0f0" stroke-width="1.2"/><path d="M59 381.5 H283" stroke="#4b4b4b" stroke-width="1"/><path d="M58.5 366.5 V381.1 M160.5 366.5 V381.1 M282.5 366.5 V381.1" stroke="#4d4d4d" stroke-width="1"/><path d="M270 391.2 H276" stroke="#f0f0f0" stroke-width="1.2"/><path d="M59 413.5 H283" stroke="#4b4b4b" stroke-width="1"/><path d="M59 427.5 H283" stroke="#4b4b4b" stroke-width="1"/><path d="M59 442.5 H283" stroke="#4b4b4b" stroke-width="1"/><path d="M59 456.5 H283" stroke="#4b4b4b" stroke-width="1"/><path d="M58.5 398.5 V456.9 M160.5 398.5 V456.9 M282.5 398.5 V456.9" stroke="#4d4d4d" stroke-width="1"/><path d="M270 467.0 H276" stroke="#f0f0f0" stroke-width="1.2"/><path d="M59 488.5 H283" stroke="#4b4b4b" stroke-width="1"/><path d="M59 503.5 H283" stroke="#4b4b4b" stroke-width="1"/><path d="M59 518.5 H283" stroke="#4b4b4b" stroke-width="1"/><path d="M59 532.5 H283" stroke="#4b4b4b" stroke-width="1"/><path d="M59 547.5 H283" stroke="#4b4b4b" stroke-width="1"/><path d="M58.5 474.3 V547.3 M160.5 474.3 V547.3 M282.5 474.3 V547.3" stroke="#4d4d4d" stroke-width="1"/><path d="M270 557.4 H276" stroke="#f0f0f0" stroke-width="1.2"/><path d="M59 579.5 H283" stroke="#4b4b4b" stroke-width="1"/><path d="M59 593.5 H283" stroke="#4b4b4b" stroke-width="1"/><path d="M59 608.5 H283" stroke="#4b4b4b" stroke-width="1"/><path d="M59 623.5 H283" stroke="#4b4b4b" stroke-width="1"/><path d="M59 637.5 H283" stroke="#4b4b4b" stroke-width="1"/><path d="M59 652.5 H283" stroke="#4b4b4b" stroke-width="1"/><path d="M58.5 564.7 V652.3 M160.5 564.7 V652.3 M282.5 564.7 V652.3" stroke="#4d4d4d" stroke-width="1"/></svg>
<div class="r" style="left:293px;top:185px;width:624px;height:504px;background:#000;"></div>
<svg class="r" style="left:293px;top:185px;" width="624" height="504" viewBox="0 0 624 504"><path d="M12.50 0 V504" stroke="#111317" stroke-width="1"/><path d="M31.50 0 V504" stroke="#111317" stroke-width="1"/><path d="M51.50 0 V504" stroke="#111317" stroke-width="1"/><path d="M70.50 0 V504" stroke="#23262d" stroke-width="1"/><path d="M89.50 0 V504" stroke="#111317" stroke-width="1"/><path d="M109.50 0 V504" stroke="#111317" stroke-width="1"/><path d="M128.50 0 V504" stroke="#111317" stroke-width="1"/><path d="M148.50 0 V504" stroke="#111317" stroke-width="1"/><path d="M167.50 0 V504" stroke="#23262d" stroke-width="1"/><path d="M186.50 0 V504" stroke="#111317" stroke-width="1"/><path d="M206.50 0 V504" stroke="#111317" stroke-width="1"/><path d="M225.50 0 V504" stroke="#111317" stroke-width="1"/><path d="M244.50 0 V504" stroke="#111317" stroke-width="1"/><path d="M264.50 0 V504" stroke="#23262d" stroke-width="1"/><path d="M283.50 0 V504" stroke="#111317" stroke-width="1"/><path d="M302.50 0 V504" stroke="#111317" stroke-width="1"/><path d="M322.50 0 V504" stroke="#111317" stroke-width="1"/><path d="M341.50 0 V504" stroke="#111317" stroke-width="1"/><path d="M361.50 0 V504" stroke="#23262d" stroke-width="1"/><path d="M380.50 0 V504" stroke="#111317" stroke-width="1"/><path d="M399.50 0 V504" stroke="#111317" stroke-width="1"/><path d="M419.50 0 V504" stroke="#111317" stroke-width="1"/><path d="M438.50 0 V504" stroke="#111317" stroke-width="1"/><path d="M457.50 0 V504" stroke="#23262d" stroke-width="1"/><path d="M477.50 0 V504" stroke="#111317" stroke-width="1"/><path d="M496.50 0 V504" stroke="#111317" stroke-width="1"/><path d="M515.50 0 V504" stroke="#111317" stroke-width="1"/><path d="M535.50 0 V504" stroke="#111317" stroke-width="1"/><path d="M554.50 0 V504" stroke="#23262d" stroke-width="1"/><path d="M573.50 0 V504" stroke="#111317" stroke-width="1"/><path d="M593.50 0 V504" stroke="#111317" stroke-width="1"/><path d="M612.50 0 V504" stroke="#111317" stroke-width="1"/><path d="M0 9.50 H624" stroke="#111317" stroke-width="1"/><path d="M0 28.50 H624" stroke="#111317" stroke-width="1"/><path d="M0 47.50 H624" stroke="#111317" stroke-width="1"/><path d="M0 67.50 H624" stroke="#23262d" stroke-width="1"/><path d="M0 86.50 H624" stroke="#111317" stroke-width="1"/><path d="M0 105.50 H624" stroke="#111317" stroke-width="1"/><path d="M0 124.50 H624" stroke="#111317" stroke-width="1"/><path d="M0 144.50 H624" stroke="#111317" stroke-width="1"/><path d="M0 163.50 H624" stroke="#23262d" stroke-width="1"/><path d="M0 182.50 H624" stroke="#111317" stroke-width="1"/><path d="M0 201.50 H624" stroke="#111317" stroke-width="1"/><path d="M0 221.50 H624" stroke="#111317" stroke-width="1"/><path d="M0 240.50 H624" stroke="#111317" stroke-width="1"/><path d="M0 259.50 H624" stroke="#23262d" stroke-width="1"/><path d="M0 278.50 H624" stroke="#111317" stroke-width="1"/><path d="M0 297.50 H624" stroke="#111317" stroke-width="1"/><path d="M0 317.50 H624" stroke="#111317" stroke-width="1"/><path d="M0 336.50 H624" stroke="#111317" stroke-width="1"/><path d="M0 355.50 H624" stroke="#23262d" stroke-width="1"/><path d="M0 374.50 H624" stroke="#111317" stroke-width="1"/><path d="M0 394.50 H624" stroke="#111317" stroke-width="1"/><path d="M0 413.50 H624" stroke="#111317" stroke-width="1"/><path d="M0 432.50 H624" stroke="#111317" stroke-width="1"/><path d="M0 451.50 H624" stroke="#681818" stroke-width="1"/><path d="M0 471.50 H624" stroke="#111317" stroke-width="1"/><path d="M0 490.50 H624" stroke="#111317" stroke-width="1"/><path d="M6.0 23.5 H40.5 M46.5 23.5 H81.0 M43.5 0 V20.5 M43.5 26.5 V61.0" stroke="#e0e0e0" stroke-width="1"/><rect x="40.5" y="20.5" width="6" height="6" fill="none" stroke="#e0e0e0" stroke-width="1"/><path d="M169.39999999999998 259.8 H43.5 V451.9 H169.39999999999998" fill="none" stroke="#d8d8d8" stroke-width="1"/><path d="M169.39999999999998 261.8 V449.9" stroke="#e6e6e6" stroke-width="1"/><path d="M169.39999999999998 259.8 L167.89999999999998 265.8 H170.89999999999998Z M169.39999999999998 451.9 L167.89999999999998 445.9 H170.89999999999998Z" fill="#e6e6e6"/><text transform="translate(166.89999999999998 355.5) rotate(-90)" font-family="Liberation Sans" font-size="8" font-weight="bold" fill="#d8d8d8" text-anchor="middle" textLength="28.5" lengthAdjust="spacingAndGlyphs">100.0000</text><circle cx="272" cy="259.6" r="34.6" fill="none" stroke="#d8d8d8" stroke-width="1.1"/><circle cx="271.79999999999995" cy="363.6" r="70" fill="none" stroke="#d8d8d8" stroke-width="1.1"/><circle cx="271.79999999999995" cy="433.20000000000005" r="41.1" fill="none" stroke="#d8d8d8" stroke-width="1.1"/><path d="M13.5 452.5 V490.5 H50.5" fill="none" stroke="#e6e6e6" stroke-width="1.2"/><rect x="10.5" y="486.5" width="7.5" height="7.5" fill="none" stroke="#e6e6e6" stroke-width="1.1"/><path d="M15 439 L20 444.5 L25 439 M20 444.5 V449.5" fill="none" stroke="#e6e6e6" stroke-width="1.2"/><path d="M55 479 L65 489.5 M65 479 L55 489.5" stroke="#e6e6e6" stroke-width="1.2"/><circle cx="565" cy="58.5" r="38.2" fill="none" stroke="#3a3a3a" stroke-width="9"/><defs><linearGradient id="vcg" x1="0" y1="0" x2="1" y2="1"><stop offset="0" stop-color="#c4c4c4"/><stop offset="1" stop-color="#a6a6a6"/></linearGradient></defs><rect x="546.5" y="40.5" width="37" height="36" fill="url(#vcg)"/></svg>
<span class="t" style="left:842.80px;top:238.29px;font-size:11px;color:#3c3c3c;transform:scaleX(0.8397);">Сверху</span>
<span class="t" style="left:852.60px;top:197.65px;font-size:14px;color:#cdcdcd;transform:scaleX(1.0495);">С</span>
<span class="t" style="left:893.80px;top:236.95px;font-size:14px;color:#cdcdcd;transform:scaleX(0.8663);">В</span>
<span class="t" style="left:851.50px;top:278.15px;font-size:14px;color:#cdcdcd;transform:scaleX(0.9258);">Ю</span>
<span class="t" style="left:814.20px;top:236.95px;font-size:14px;color:#cdcdcd;transform:scaleX(0.8639);">З</span>
<div class="r" style="left:840px;top:306px;width:35px;height:12px;background:#5e5e5e;border-radius:4px;box-shadow:inset 0 0 0 1px #777;"></div>
<span class="t" style="left:843.00px;top:308.73px;font-size:8px;color:#9a9a9a;transform:scaleX(0.9500);">МСК</span>
<svg class="r" style="left:866px;top:309px;" width="8" height="6" viewBox="0 0 8 6"><path d="M1 1 H6 L3.5 4Z" fill="#8a8a8a"/></svg>
<div class="r" style="left:889px;top:338px;width:25px;height:162px;background:rgba(84,84,84,.74);border-radius:3px;box-shadow:inset 0 0 0 1px rgba(120,120,120,.45);"></div>
<svg class="r" style="left:889px;top:338px;" width="25" height="162" viewBox="0 0 25 162"><circle cx="19" cy="5" r="3" fill="none" stroke="#262626" stroke-width=".8"/><path d="M17.5 3.5 L20.5 6.5 M20.5 3.5 L17.5 6.5" stroke="#262626" stroke-width=".7"/><path d="M5 22.5 A8 8 0 1 1 20.5 21 L20 14 C19.5 12.5 18 14.5 13 14.5" fill="none" stroke="#262626" stroke-width="1.1"/><circle cx="13" cy="22.8" r="8.2" fill="none" stroke="#262626" stroke-width="1.1"/><circle cx="13" cy="22.8" r="4.2" fill="none" stroke="#262626" stroke-width="1.1"/><path d="M6 27 L9.5 25.5 M20 27 L16.5 25.5" stroke="#262626" stroke-width="1"/><path d="M11 38.5 H15 L13 40.5Z M11 91.5 H15 L13 93.5Z M11 120.5 H15 L13 122.5Z" fill="#262626"/><path d="M3 43.5 H22 M3 125 H22" stroke="#5a5a5a" stroke-width=".8"/><path d="M9 65 C7 60 5 57 7 56 C8.5 55.5 9.5 58 10 60 V49.5 C10 48 12 48 12 49.5 V58 V48 C12 46.5 14 46.5 14 48 V58 V49 C14 47.5 16 47.5 16 49 V58 V51 C16 49.5 18 49.5 18 51 V60 C18 64 16.5 66 13 66 Z" fill="none" stroke="#262626" stroke-width="1"/><path d="M5 69 L17 81 M17 69 L5 81" stroke="#262626" stroke-width="1"/><circle cx="16" cy="80" r="4" fill="#4a4a4a" stroke="#262626" stroke-width="1.1"/><path d="M19 83 L22 86" stroke="#262626" stroke-width="1.6"/><path d="M13 98 V114 M11 100.5 L13 97.5 L15 100.5" fill="none" stroke="#262626" stroke-width="1.2"/><ellipse cx="13" cy="107" rx="8.5" ry="3" fill="none" stroke="#262626" stroke-width="1"/><path d="M4.5 107 L7 105 V109Z" fill="#262626"/><rect x="4" y="129" width="4.5" height="4.5" fill="none" stroke="#262626" stroke-width=".9"/><rect x="10.3" y="129" width="4.5" height="4.5" fill="none" stroke="#262626" stroke-width=".9"/><rect x="16.6" y="129" width="4.5" height="4.5" fill="none" stroke="#262626" stroke-width=".9"/><rect x="4" y="136" width="12" height="10" rx="1" fill="none" stroke="#262626" stroke-width=".9"/><path d="M8 138 L13 141 L8 144Z" fill="#262626"/><circle cx="20" cy="157" r="2.2" fill="none" stroke="#262626" stroke-width=".8"/></svg>
<div class="r" style="left:32px;top:689px;width:886px;height:22px;background:#3c3c3c;"></div>
<div class="r" style="left:32px;top:688px;width:303px;height:1px;background:#4a4a4a;"></div>
<svg class="r" style="left:32px;top:688px;" width="130" height="17" viewBox="0 0 130 17"><defs><linearGradient id="mg" x1="0" y1="0" x2="0" y2="1"><stop offset="0" stop-color="#6c6c6c"/><stop offset="1" stop-color="#8e8e8e"/></linearGradient></defs><path d="M62 1 C65 1 65.5 3 66.5 9 C67.5 12.5 68.5 14.4 72 14.4 H98 C101 14.4 102 12.5 103 9 C104 3 104.5 1 107 1Z" fill="#555"/><path d="M6 1 C9 1 9.5 3 10.5 9 C11.5 12.5 12.5 14.4 16 14.4 H56 C59 14.4 60 12.5 61 9 C62 3 62.5 1 65 1Z" fill="url(#mg)"/><path d="M106 12.5 C107.5 12.5 107.5 10 108 6 C108.5 3 109.5 1.5 113 1.5 H124.7 C122.5 6 122.5 12.5 118 12.5Z" fill="#555"/><path d="M112.4 7.8 H119.4 M115.9 4.3 V11.3" stroke="#e0e0e0" stroke-width="1.6"/></svg>
<span class="t" style="left:49.90px;top:690.01px;font-size:10.5px;color:#ffffff;font-weight:bold;transform:scaleX(0.8708);">Модель</span>
<span class="t" style="left:103.00px;top:690.43px;font-size:10px;color:#a4a4b0;transform:scaleX(0.8608);">Лист1</span>
<div class="r" style="left:335px;top:690px;width:140px;height:19px;background:#5a5a5a;box-shadow:inset 0 0 0 1px #6a6a6a;"></div>
<span class="t" style="left:358.40px;top:695.20px;font-size:10.4px;color:#f4f4f4;transform:scaleX(0.9047);">35.9703, 222.4554, 0.0000</span>
<div class="r" style="left:476px;top:690px;width:45px;height:19px;background:#484848;"></div>
<span class="t" style="left:479.50px;top:695.37px;font-size:10.2px;color:#f0f0f0;transform:scaleX(0.8891);">МОДЕЛЬ</span>
<div class="r" style="left:523px;top:691px;width:18px;height:18px;background:#4a78b0;"></div>
<div class="r" style="left:541px;top:691px;width:29px;height:18px;background:#484848;"></div>
<div class="r" style="left:572px;top:691px;width:19px;height:18px;background:#484848;"></div>
<div class="r" style="left:593px;top:691px;width:17px;height:18px;background:#4a78b0;"></div>
<div class="r" style="left:610px;top:691px;width:12px;height:18px;background:#484848;"></div>
<div class="r" style="left:624px;top:691px;width:27px;height:18px;background:#484848;"></div>
<div class="r" style="left:653.5px;top:691px;width:17.0px;height:18px;background:#4a78b0;"></div>
<div class="r" style="left:672px;top:691px;width:16.5px;height:18px;background:#4a78b0;"></div>
<div class="r" style="left:688.5px;top:691px;width:11.5px;height:18px;background:#484848;"></div>
<div class="r" style="left:701px;top:691px;width:20px;height:18px;background:#484848;"></div>
<div class="r" style="left:724px;top:691px;width:17.299999999999955px;height:18px;background:#4a78b0;"></div>
<div class="r" style="left:742.4px;top:691px;width:16.700000000000045px;height:18px;background:#4a78b0;"></div>
<div class="r" style="left:759.1px;top:691px;width:46.89999999999998px;height:18px;background:#484848;"></div>
<div class="r" style="left:808px;top:691px;width:27px;height:18px;background:#484848;"></div>
<div class="r" style="left:837px;top:691px;width:18px;height:18px;background:#484848;"></div>
<div class="r" style="left:857px;top:691px;width:19px;height:18px;background:#484848;"></div>
<div class="r" style="left:878px;top:691px;width:18px;height:18px;background:#484848;"></div>
<div class="r" style="left:898px;top:691px;width:17px;height:18px;background:#484848;"></div>
<div class="r" style="left:476px;top:690px;width:45px;height:20px;background:transparent;box-shadow:inset 0 0 0 1px #575757;"></div>
<div class="r" style="left:571px;top:690px;width:81px;height:20px;background:transparent;box-shadow:inset 0 0 0 1px #575757;"></div>
<div class="r" style="left:652px;top:690px;width:48px;height:20px;background:transparent;box-shadow:inset 0 0 0 1px #575757;"></div>
<div class="r" style="left:700px;top:690px;width:22px;height:20px;background:transparent;box-shadow:inset 0 0 0 1px #575757;"></div>
<div class="r" style="left:722px;top:690px;width:84px;height:20px;background:transparent;box-shadow:inset 0 0 0 1px #575757;"></div>
<div class="r" style="left:807px;top:690px;width:29px;height:20px;background:transparent;box-shadow:inset 0 0 0 1px #575757;"></div>
<div class="r" style="left:837px;top:690px;width:19px;height:20px;background:transparent;box-shadow:inset 0 0 0 1px #575757;"></div>
<div class="r" style="left:857px;top:690px;width:20px;height:20px;background:transparent;box-shadow:inset 0 0 0 1px #575757;"></div>
<div class="r" style="left:878px;top:690px;width:19px;height:20px;background:transparent;box-shadow:inset 0 0 0 1px #575757;"></div>
<div class="r" style="left:898px;top:690px;width:18px;height:20px;background:transparent;box-shadow:inset 0 0 0 1px #575757;"></div>
<svg class="r" style="left:0px;top:0px;pointer-events:none;" width="950" height="744" viewBox="0 0 950 744"><path d="M526.5 695.5 H538 M526.5 699.5 H538 M526.5 703.5 H538 M529 693 V706 M532.5 693 V706 M536 693 V706" stroke="#f0f0f0" stroke-width="1"/><rect x="546" y="694" width="1.6" height="1.6" fill="#e6e6e6"/><rect x="546" y="698" width="1.6" height="1.6" fill="#e6e6e6"/><rect x="546" y="702" width="1.6" height="1.6" fill="#e6e6e6"/><rect x="550" y="694" width="1.6" height="1.6" fill="#e6e6e6"/><rect x="550" y="698" width="1.6" height="1.6" fill="#e6e6e6"/><rect x="550" y="702" width="1.6" height="1.6" fill="#e6e6e6"/><rect x="554" y="694" width="1.6" height="1.6" fill="#e6e6e6"/><rect x="554" y="698" width="1.6" height="1.6" fill="#e6e6e6"/><rect x="554" y="702" width="1.6" height="1.6" fill="#e6e6e6"/><path d="M563.0 698.2 H568.0 L565.5 700.9Z" fill="#f0f0f0"/><path d="M613.5 698.2 H618.5 L616 700.9Z" fill="#f0f0f0"/><path d="M643.5 698.2 H648.5 L646 700.9Z" fill="#f0f0f0"/><path d="M692.5 698.2 H697.5 L695 700.9Z" fill="#f0f0f0"/><path d="M797.5 698.2 H802.5 L800 700.9Z" fill="#f0f0f0"/><path d="M826.5 698.2 H831.5 L829 700.9Z" fill="#f0f0f0"/><path d="M577 694 V705.5 H589" fill="none" stroke="#d8d8d8" stroke-width="1"/><path d="M577 701 H580.5 V705.5" fill="none" stroke="#d8d8d8" stroke-width="1"/><circle cx="599" cy="701" r="4.8" fill="none" stroke="#f0f0f0" stroke-width="1.2"/><path d="M599 701 L607 694" stroke="#f0f0f0" stroke-width="1.2"/><path d="M627 693 L641 707" stroke="#d04a3a" stroke-width="1.2"/><path d="M633 693 V707" stroke="#3cb050" stroke-width="1.5"/><path d="M656 705.5 H668 M657 705 L667 696" stroke="#f0f0f0" stroke-width="1.2"/><rect x="677" y="697" width="9.5" height="9.5" fill="none" stroke="#f0f0f0" stroke-width="1.1"/><circle cx="677" cy="696.5" r="2" fill="#5a88c0" stroke="#f0f0f0" stroke-width="1"/><path d="M704 696 H718 M704 699 H713 M704 702 H716 M704 705 H711" stroke="#e0e0e0" stroke-width="1.4"/><path d="M732.5 693.5 L734.5 701 L738.0 705.5 L732.5 703 L727.0 705.5 L730.5 701Z" fill="#eaeaea"/><path d="M750.5 693.5 L752.5 701 L756.0 705.5 L750.5 703 L745.0 705.5 L748.5 701Z" fill="#eaeaea"/><path d="M768 693.5 L770 701 L773.5 705.5 L768 703 L762.5 705.5 L766 701Z" fill="#eaeaea"/><circle cx="739.5" cy="696" r="2" fill="none" stroke="#eaeaea" stroke-width="1"/><path d="M756 693 L754 697 H757 L755 701" stroke="#eaeaea" stroke-width="1" fill="none"/><path d="M815.50 694.90 L816.71 693.42 L817.87 693.77 L818.06 695.68 L818.75 696.25 L820.66 696.06 L821.23 697.13 L820.01 698.60 L820.10 699.50 L821.58 700.71 L821.23 701.87 L819.32 702.06 L818.75 702.75 L818.94 704.66 L817.87 705.23 L816.40 704.01 L815.50 704.10 L814.29 705.58 L813.13 705.23 L812.94 703.32 L812.25 702.75 L810.34 702.94 L809.77 701.87 L810.99 700.40 L810.90 699.50 L809.42 698.29 L809.77 697.13 L811.68 696.94 L812.25 696.25 L812.06 694.34 L813.13 693.77 L814.60 694.99 Z M817.7 699.5 A2.2 2.2 0 1 0 813.3 699.5 A2.2 2.2 0 1 0 817.7 699.5Z" fill="#e4e4e4" fill-rule="evenodd"/><path d="M846 692.5 V706.5 M839 699.5 H853" stroke="#f2f2f2" stroke-width="1.6"/><rect x="860.5" y="693" width="4.5" height="4.5" fill="none" stroke="#e0e0e0"/><circle cx="870" cy="697.5" r="2.6" fill="none" stroke="#e0e0e0"/><path d="M864 701.5 L861 706 H867Z" fill="none" stroke="#e0e0e0"/><rect x="881.5" y="694.5" width="12" height="10" fill="none" stroke="#e0e0e0" stroke-width="1.2"/><path d="M884.5 702 L891 697" stroke="#e0e0e0" stroke-width="1"/><path d="M884 702.5 L884.5 699.5 L887 702Z M891.5 696.5 L891 699.5 L888.5 697Z" fill="#e0e0e0"/><path d="M900.5 694.5 H913 M900.5 699.5 H913 M900.5 704.5 H913" stroke="#f0f0f0" stroke-width="1.6"/></svg>
<span class="t" style="left:782.50px;top:695.20px;font-size:10.4px;color:#f0f0f0;font-weight:bold;transform:scaleX(0.8638);">1:1</span>
<div class="r" style="left:479px;top:666px;width:39px;height:22px;background:linear-gradient(#6c6c6c,#4a4a4a);border-radius:2px 2px 0 0;"></div>
<svg class="r" style="left:0px;top:0px;pointer-events:none;" width="950" height="744" viewBox="0 0 950 744"><path d="M482.5 671 V684.5 M485 671 V684.5" stroke="#9a9a9a" stroke-width="1" stroke-dasharray="1 1"/><path d="M491 674 L497.6 680.8 M497.6 674 L491 680.8" stroke="#f0f0f0" stroke-width="1.6"/><path d="M507.2 682.4 L512.4 676.4" stroke="#f0f0f0" stroke-width="1.7" stroke-linecap="round"/><path d="M511 677.5 C510 675.5 511 673.2 513.5 672.8 L512.6 675 L514.4 676.8 L516.5 675.9 C516.2 678.3 514 679.3 512 678.6Z" fill="#f0f0f0"/></svg>
<div class="r" style="left:522px;top:647px;width:246px;height:18px;background:linear-gradient(#5a76a4,#4a6592);"></div>
<span class="t" style="left:540.50px;top:652.51px;font-size:9.2px;color:#e8ecf2;font-weight:bold;transform:scaleX(0.9066);">FULLPLOTPATH</span>
<svg class="r" style="left:730px;top:647px;" width="38" height="18" viewBox="0 0 38 18"><circle cx="13.3" cy="9.4" r="5.3" fill="#f4f4f4" stroke="#333" stroke-width=".8"/><text x="13.3" y="12.8" font-family="Liberation Sans" font-weight="bold" font-size="9" fill="#222" text-anchor="middle">?</text><circle cx="30" cy="8.5" r="4.8" fill="#3a92dc"/><path d="M26 7 H34 M30 4 V13" stroke="#4a6592" stroke-width=".8"/><circle cx="33" cy="12" r="2" fill="none" stroke="#5a5a5a" stroke-width="1"/></svg>
<div class="r" style="left:522px;top:665px;width:210px;height:22px;background:#ffffff;"></div>
<svg class="r" style="left:522px;top:665px;" width="210" height="22" viewBox="0 0 210 22"><rect x="2.5" y="7.5" width="12" height="9" fill="#f8f8f8" stroke="#555" stroke-width="1"/><rect x="2.5" y="7.5" width="12" height="2" fill="#777"/><path d="M5 12 L7 13 L5 14 M8 14.5 H11" stroke="#333" stroke-width=".7" fill="none"/><path d="M17.5 9.5 H21 L19.25 11.5Z" fill="#777"/><path d="M201 16 L204 12.5 L207 16Z" fill="#111"/></svg>
<span class="t" style="left:547.95px;top:674.55px;font-size:8.8px;color:#151515;letter-spacing:-0.158px;">_FULLPLOTPATH</span>
<div class="r" style="left:517px;top:640.5px;width:264px;height:49.299999999999955px;background:transparent;border:4.2px solid #f00a0a;border-radius:12px;box-sizing:border-box;"></div>
<div class="r" style="left:32px;top:711px;width:886px;height:1px;background:#5a2a5e;"></div>
<div class="r" style="left:917px;top:55px;width:1px;height:657px;background:#5a2a5e;"></div>
</body></html>
